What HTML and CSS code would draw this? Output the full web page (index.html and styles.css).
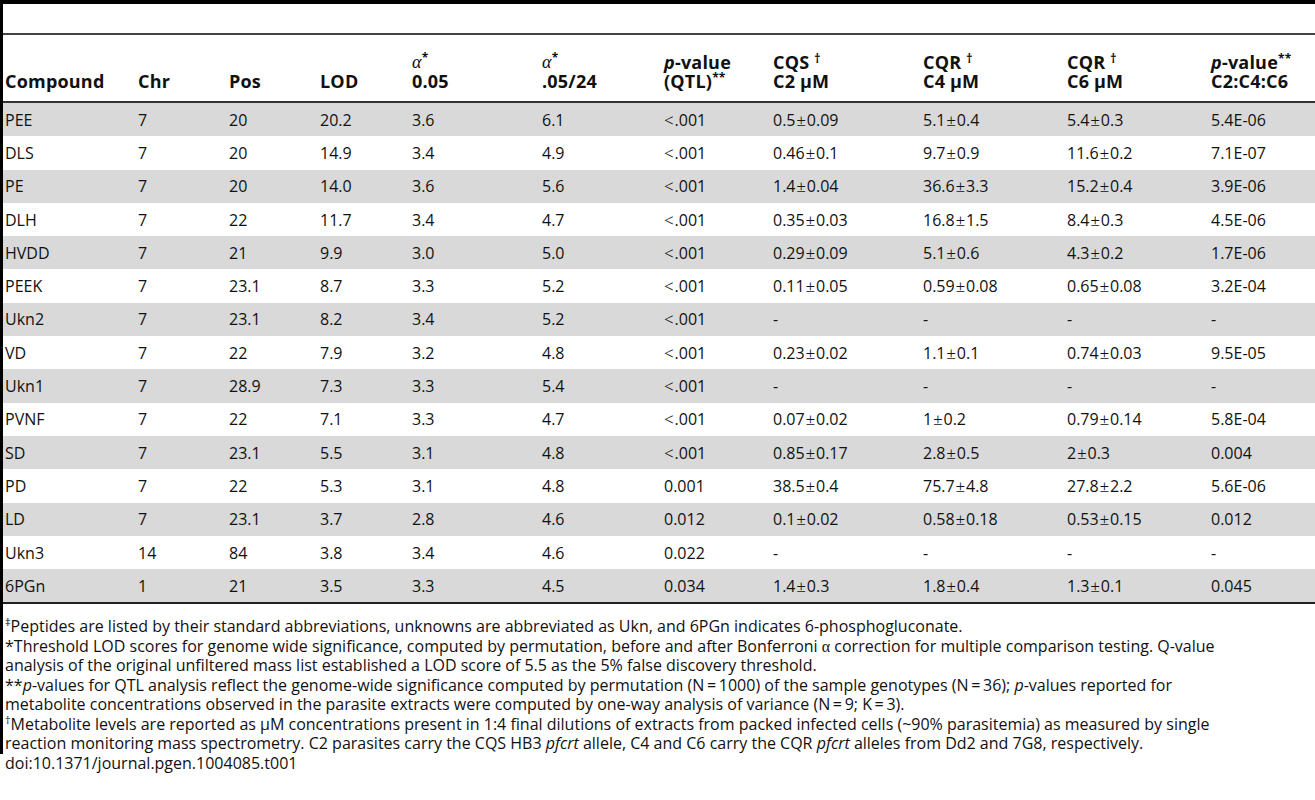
FILE: index.html
```html
<!DOCTYPE html>
<html lang="en">
<head>
    <meta charset="UTF-8">
    <title>Table 1 - Metabolite QTL</title>
    <link rel="stylesheet" href="styles.css">
</head>
<body>
    <div class="frame">
        <table class="qtl">
            <colgroup>
                <col class="c-compound">
                <col class="c-chr">
                <col class="c-pos">
                <col class="c-lod">
                <col class="c-a1">
                <col class="c-a2">
                <col class="c-pq">
                <col class="c-c2">
                <col class="c-c4">
                <col class="c-c6">
                <col class="c-pc">
            </colgroup>
            <thead>
                <tr class="caption-row"><th colspan="11"></th></tr>
                <tr class="head-row">
                    <th>Compound</th>
                    <th>Chr</th>
                    <th>Pos</th>
                    <th>LOD</th>
                    <th><span class="sym">α</span><sup>*</sup><br>0.05</th>
                    <th><span class="sym">α</span><sup>*</sup><br>.05/24</th>
                    <th><i>p</i>-value<br>(QTL)<sup>**</sup></th>
                    <th>CQS <sup>†</sup><br>C2 μM</th>
                    <th>CQR <sup>†</sup><br>C4 μM</th>
                    <th>CQR <sup>†</sup><br>C6 μM</th>
                    <th><i>p</i>-value<sup>**</sup><br>C2:C4:C6</th>
                </tr>
            </thead>
            <tbody id="rows"></tbody>
        </table>

        <div class="notes">
            <p><sup>‡</sup>Peptides are listed by their standard abbreviations, unknowns are abbreviated as Ukn, and 6PGn indicates 6-phosphogluconate.</p>
            <p>*Threshold LOD scores for genome wide significance, computed by permutation, before and after Bonferroni <span class="sym">α</span> correction for multiple comparison testing. Q-value<br>analysis of the original unfiltered mass list established a LOD score of 5.5 as the 5% false discovery threshold.</p>
            <p>**<i>p</i>-values for QTL analysis reflect the genome-wide significance computed by permutation (N&#8201;=&#8201;1000) of the sample genotypes (N&#8201;=&#8201;36); <i>p</i>-values reported for<br>metabolite concentrations observed in the parasite extracts were computed by one-way analysis of variance (N&#8201;=&#8201;9; K&#8201;=&#8201;3).</p>
            <p><sup>†</sup>Metabolite levels are reported as μM concentrations present in 1:4 final dilutions of extracts from packed infected cells (~90% parasitemia) as measured by single<br>reaction monitoring mass spectrometry. C2 parasites carry the CQS HB3 <i>pfcrt</i> allele, C4 and C6 carry the CQR <i>pfcrt</i> alleles from Dd2 and 7G8, respectively.</p>
        </div>
    </div>
    <p class="doi">doi:10.1371/journal.pgen.1004085.t001</p>

    <script>
        // compound, chr, pos, lod, a 0.05, a .05/24, p (QTL), C2, C4, C6, p C2:C4:C6
        const data = [
            ['PEE', '7', '20', '20.2', '3.6', '6.1', '<.001', '0.5±0.09', '5.1±0.4', '5.4±0.3', '5.4E-06'],
            ['DLS', '7', '20', '14.9', '3.4', '4.9', '<.001', '0.46±0.1', '9.7±0.9', '11.6±0.2', '7.1E-07'],
            ['PE', '7', '20', '14.0', '3.6', '5.6', '<.001', '1.4±0.04', '36.6±3.3', '15.2±0.4', '3.9E-06'],
            ['DLH', '7', '22', '11.7', '3.4', '4.7', '<.001', '0.35±0.03', '16.8±1.5', '8.4±0.3', '4.5E-06'],
            ['HVDD', '7', '21', '9.9', '3.0', '5.0', '<.001', '0.29±0.09', '5.1±0.6', '4.3±0.2', '1.7E-06'],
            ['PEEK', '7', '23.1', '8.7', '3.3', '5.2', '<.001', '0.11±0.05', '0.59±0.08', '0.65±0.08', '3.2E-04'],
            ['Ukn2', '7', '23.1', '8.2', '3.4', '5.2', '<.001', '-', '-', '-', '-'],
            ['VD', '7', '22', '7.9', '3.2', '4.8', '<.001', '0.23±0.02', '1.1±0.1', '0.74±0.03', '9.5E-05'],
            ['Ukn1', '7', '28.9', '7.3', '3.3', '5.4', '<.001', '-', '-', '-', '-'],
            ['PVNF', '7', '22', '7.1', '3.3', '4.7', '<.001', '0.07±0.02', '1±0.2', '0.79±0.14', '5.8E-04'],
            ['SD', '7', '23.1', '5.5', '3.1', '4.8', '<.001', '0.85±0.17', '2.8±0.5', '2±0.3', '0.004'],
            ['PD', '7', '22', '5.3', '3.1', '4.8', '0.001', '38.5±0.4', '75.7±4.8', '27.8±2.2', '5.6E-06'],
            ['LD', '7', '23.1', '3.7', '2.8', '4.6', '0.012', '0.1±0.02', '0.58±0.18', '0.53±0.15', '0.012'],
            ['Ukn3', '14', '84', '3.8', '3.4', '4.6', '0.022', '-', '-', '-', '-'],
            ['6PGn', '1', '21', '3.5', '3.3', '4.5', '0.034', '1.4±0.3', '1.8±0.4', '1.3±0.1', '0.045']
        ];

        function fmt(text) {
            return text
                .replace('<', '<span class="lt">&lt;</span>')
                .replace('±', '<span class="pm">±</span>');
        }

        const body = document.getElementById('rows');
        data.forEach(row => {
            const tr = document.createElement('tr');
            row.forEach(cell => {
                const td = document.createElement('td');
                td.innerHTML = fmt(cell);
                tr.appendChild(td);
            });
            body.appendChild(tr);
        });
    </script>
</body>
</html>
```

FILE: styles.css
```css
body {
    margin: 0;
    background-color: #fff;
    color: #111;
    font-family: "Open Sans", "Noto Sans", sans-serif;
    font-size: 16px;
}

.frame {
    border-top: 4px solid #000;
    border-left: 3px solid #000;
}

.qtl {
    width: 100%;
    table-layout: fixed;
    border-collapse: collapse;
}

.c-compound { width: 133px; }
.c-chr { width: 91px; }
.c-pos { width: 91px; }
.c-lod { width: 92px; }
.c-a1 { width: 130px; }
.c-a2 { width: 122px; }
.c-pq { width: 109px; }
.c-c2 { width: 150px; }
.c-c4 { width: 144px; }
.c-c6 { width: 144px; }
.c-pc { width: 106px; }

.caption-row th {
    height: 29px;
    padding: 0;
    border-bottom: 2px solid #444;
}

.head-row th {
    height: 56px;
    padding: 0 0 10px 2px;
    text-align: left;
    vertical-align: bottom;
    font-size: 18px;
    font-weight: bold;
    line-height: 19px;
    letter-spacing: 0.2px;
    border-bottom: 2px solid #333;
}

.head-row sup {
    font-size: 12px;
    line-height: 0;
    vertical-align: 6px;
}

.sym, .pm, .lt {
    font-family: "Liberation Serif", "DejaVu Serif", serif;
    font-weight: normal;
}

.sym {
    font-size: 18px;
}

.head-row .sym {
    font-style: italic;
}

.pm {
    font-size: 17px;
    margin: 0 1px;
}

.lt {
    font-size: 17px;
    margin-right: 1px;
}

.qtl td {
    height: 33.3px;
    padding: 0 0 0 2px;
    white-space: nowrap;
}

.qtl tbody tr:nth-child(odd) {
    background-color: #d9d9d9;
}

.qtl tbody tr:last-child td {
    border-bottom: 2px solid #222;
}

.notes {
    padding: 13px 0 0 2px;
}

.notes p {
    margin: 0;
    line-height: 19.5px;
    white-space: nowrap;
}

.notes sup {
    font-size: 11px;
    line-height: 0;
}

.notes .sym {
    font-size: 16px;
}

.doi {
    margin: 0;
    padding-left: 5px;
    line-height: 19.5px;
}
```
